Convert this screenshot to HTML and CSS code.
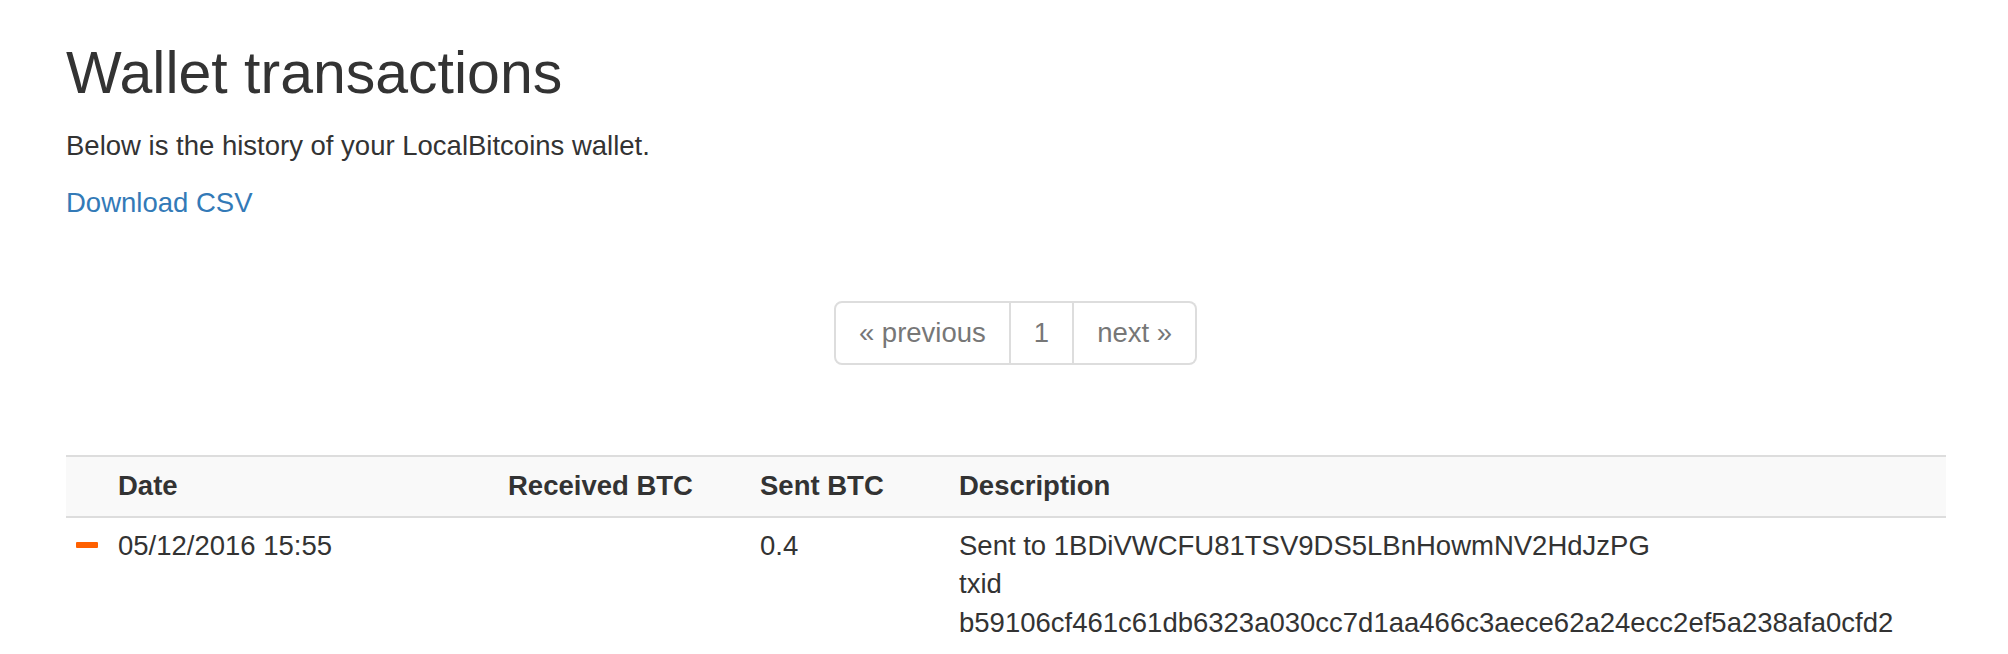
FILE: index.html
```html
<!DOCTYPE html>
<html lang="en">
<head>
    <meta charset="UTF-8">
    <title>Wallet transactions</title>
    <link rel="stylesheet" href="styles.css">
</head>
<body>
    <div class="container">
        <h1>Wallet transactions</h1>
        <p>Below is the history of your LocalBitcoins wallet.</p>
        <p><a href="#">Download CSV</a></p>

        <div class="pager-wrap">
            <ul class="pagination">
                <li class="disabled"><span>&laquo; previous</span></li>
                <li class="disabled"><span>1</span></li>
                <li class="disabled"><span>next &raquo;</span></li>
            </ul>
        </div>

        <table class="tx-table">
            <colgroup>
                <col class="col-icon">
                <col class="col-date">
                <col class="col-received">
                <col class="col-sent">
                <col>
            </colgroup>
            <thead>
                <tr>
                    <th></th>
                    <th>Date</th>
                    <th>Received BTC</th>
                    <th>Sent BTC</th>
                    <th>Description</th>
                </tr>
            </thead>
            <tbody>
                <tr>
                    <td><span class="icon-minus"></span></td>
                    <td>05/12/2016 15:55</td>
                    <td></td>
                    <td>0.4</td>
                    <td>
                        Sent to 1BDiVWCFU81TSV9DS5LBnHowmNV2HdJzPG<br>
                        txid<br>
                        b59106cf461c61db6323a030cc7d1aa466c3aece62a24ecc2ef5a238afa0cfd2
                    </td>
                </tr>
            </tbody>
        </table>
    </div>
</body>
</html>
```

FILE: styles.css
```css
:root {
    --text-color: #333;
    --link-color: #337ab7;
    --muted-color: #777;
    --border-color: #ddd;
    --head-bg: #f9f9f9;
}

body {
    margin: 0;
    background-color: #fff;
    color: var(--text-color);
    font-family: "Liberation Sans", Arial, sans-serif;
    font-size: 27.5px;
    line-height: 1.4;
}

.container {
    width: 1880px;
    padding-left: 66px;
}

h1 {
    font-size: 59px;
    font-weight: normal;
    line-height: 66px;
    margin: 40px 0 21px;
}

p {
    margin: 0 0 18px;
}

a {
    color: var(--link-color);
    text-decoration: none;
}

.pager-wrap {
    display: flex;
    justify-content: center;
    padding-left: 19px;
    margin: 79px 0 90px;
}

.pagination {
    display: flex;
    list-style: none;
    margin: 0;
    padding: 0;
}

.pagination li span {
    display: block;
    padding: 11px 23px;
    line-height: 38px;
    color: var(--muted-color);
    border: 2px solid var(--border-color);
    border-left: none;
}

.pagination li:first-child span {
    border-left: 2px solid var(--border-color);
    border-radius: 8px 0 0 8px;
}

.pagination li:last-child span {
    border-radius: 0 8px 8px 0;
}

.tx-table {
    width: 100%;
    table-layout: fixed;
    border-collapse: collapse;
}

.col-icon { width: 42px; }
.col-date { width: 390px; }
.col-received { width: 252px; }
.col-sent { width: 199px; }

.tx-table th,
.tx-table td {
    padding: 10px;
    text-align: left;
    vertical-align: top;
}

.tx-table tbody td {
    padding-top: 9px;
}

.tx-table thead th {
    background-color: var(--head-bg);
    border-top: 2px solid var(--border-color);
    border-bottom: 2px solid var(--border-color);
    font-weight: bold;
}

.icon-minus {
    display: block;
    width: 22px;
    height: 6px;
    margin-top: 15px;
    background-color: #ff6000;
    border-radius: 1px;
}
```
